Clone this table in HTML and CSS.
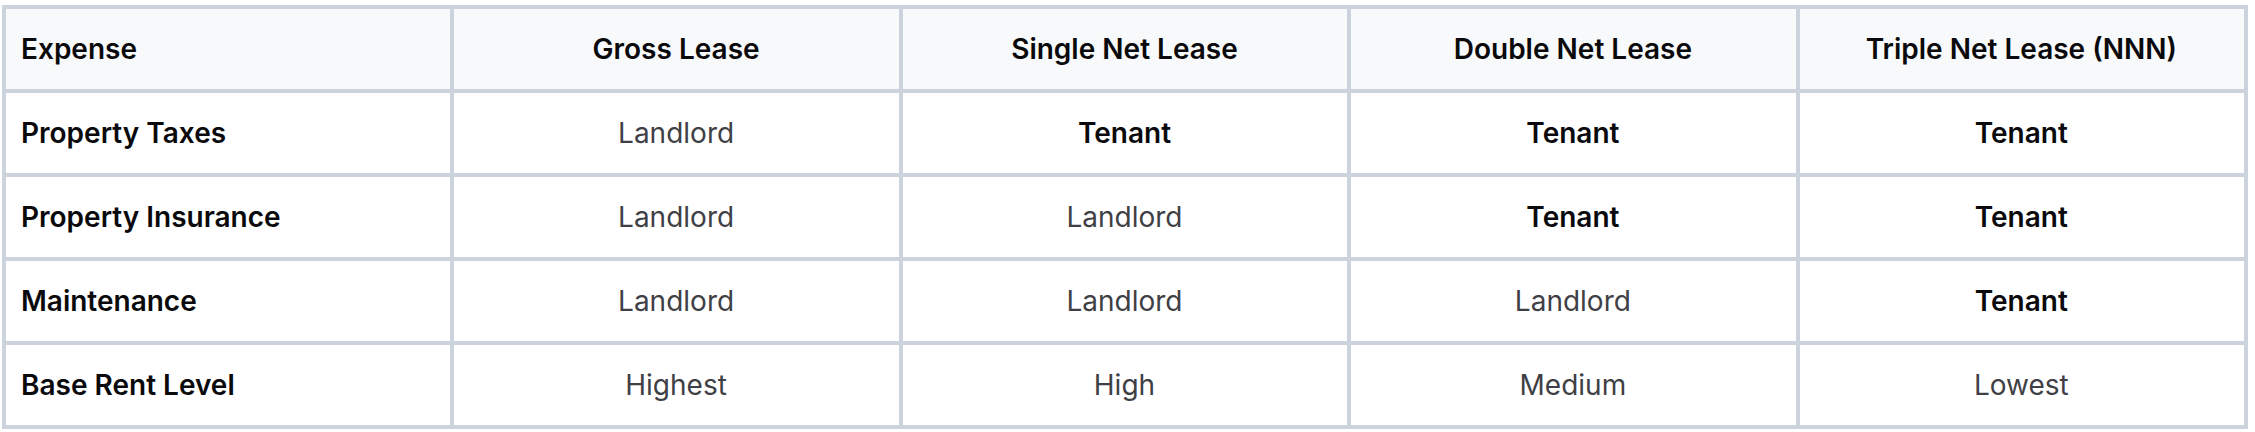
FILE: index.html
```html
<!DOCTYPE html>
<html lang="en">
<head>
<meta charset="utf-8">
<title>Lease Comparison</title>
<link rel="stylesheet" href="styles.css">
</head>
<body>
<div class="wrap">
<table class="lease">
<thead>
<tr>
<th class="first">Expense</th>
<th>Gross Lease</th>
<th>Single Net Lease</th>
<th>Double Net Lease</th>
<th>Triple Net Lease (NNN)</th>
</tr>
</thead>
<tbody>
<tr>
<td class="first">Property Taxes</td>
<td>Landlord</td>
<td class="strong">Tenant</td>
<td class="strong">Tenant</td>
<td class="strong">Tenant</td>
</tr>
<tr>
<td class="first">Property Insurance</td>
<td>Landlord</td>
<td>Landlord</td>
<td class="strong">Tenant</td>
<td class="strong">Tenant</td>
</tr>
<tr>
<td class="first">Maintenance</td>
<td>Landlord</td>
<td>Landlord</td>
<td>Landlord</td>
<td class="strong">Tenant</td>
</tr>
<tr>
<td class="first">Base Rent Level</td>
<td>Highest</td>
<td>High</td>
<td>Medium</td>
<td>Lowest</td>
</tr>
</tbody>
</table>
</div>
</body>
</html>
```

FILE: styles.css
```css
html, body {
  margin: 0;
  padding: 0;
  background: #ffffff;
}
body {
  font-family: Inter, "Liberation Sans", sans-serif;
  font-size: 28px;
  color: #3f3f46;
}
.wrap {
  padding: 5px 0 0 2px;
}
.lease {
  width: 2246px;
  border-collapse: collapse;
  table-layout: fixed;
  border: 4px solid #cdd3dc;
}
.lease th,
.lease td {
  border: 4px solid #cdd3dc;
  padding: 0 16px 0 15px;
  height: 84px;
  box-sizing: border-box;
  text-align: center;
  vertical-align: middle;
  line-height: 34px;
}
.lease th {
  background: #f8f9fa;
  font-weight: 600;
  color: #0a0a0c;
}
.lease .first {
  text-align: left;
  font-weight: 600;
  color: #0a0a0c;
}
.lease .strong {
  font-weight: 600;
  color: #0a0a0c;
}
```
